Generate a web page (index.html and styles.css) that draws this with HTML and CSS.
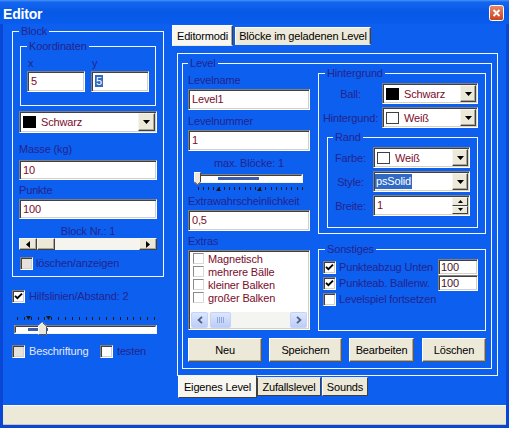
FILE: index.html
```html
<!DOCTYPE html>
<html>
<head>
<meta charset="utf-8">
<title>Editor</title>
<link rel="stylesheet" href="styles.css">
</head>
<body>
<div class="window">
  <div class="titlebar">
    <span class="title">Editor</span>
    <svg class="close" width="15" height="16" viewBox="0 0 15 16">
      <defs><linearGradient id="cg" x1="0" y1="0" x2="0" y2="1"><stop offset="0" stop-color="#ea8a6c"/><stop offset="1" stop-color="#c9401c"/></linearGradient></defs>
      <rect x="0.5" y="0.5" width="14" height="15" rx="2" fill="url(#cg)" stroke="#fff"/>
      <path d="M4.5 5L10.5 11M10.5 5L4.5 11" stroke="#fff" stroke-width="1.8"/>
    </svg>
  </div>
  <div class="frame">
    <div class="client">
      <div class="leftcol">
        <fieldset class="grp block">
          <legend>Block</legend>
          <fieldset class="grp coords">
            <legend>Koordinaten</legend>
            <div class="coord-row">
              <div class="coord"><div class="clbl">x</div><div class="edit">5</div></div>
              <div class="coord"><div class="clbl">y</div><div class="edit"><span class="sel">5</span></div></div>
            </div>
          </fieldset>
          <div class="combo bcombo"><span class="swatch black"></span><span class="ctext">Schwarz</span><span class="dd"><svg width="7" height="4" viewBox="0 0 7 4"><path d="M0 0h7L3.5 4z"/></svg></span></div>
          <div class="lbl l-masse">Masse (kg)</div>
          <div class="edit e-masse">10</div>
          <div class="lbl l-punkte">Punkte</div>
          <div class="edit e-punkte">100</div>
          <div class="lbl center l-blocknr">Block Nr.: 1</div>
          <div class="hscroll">
            <span class="sbtn"><svg width="4" height="7" viewBox="0 0 4 7"><path d="M4 0v7L0 3.5z"/></svg></span>
            <span class="sthumb"></span>
            <span class="strack"></span>
            <span class="sbtn"><svg width="4" height="7" viewBox="0 0 4 7"><path d="M0 0v7L4 3.5z"/></svg></span>
          </div>
          <div class="chk c-loeschen"><span class="cb dis"></span><span>löschen/anzeigen</span></div>
        </fieldset>
        <div class="chk c-hilfs"><span class="cb"><svg width="9" height="9" viewBox="0 0 9 9"><path d="M1 3.8L3.4 6.2L8 1.6" stroke="#000" stroke-width="1.9" fill="none"/></svg></span><span>Hilfslinien/Abstand: 2</span></div>
        <svg class="tb1" width="146" height="24" viewBox="0 0 146 24">
          <g stroke="#1a1a1a" shape-rendering="crispEdges">
            <path d="M5.5 4v3M12.5 4v3M19.5 4v3M26.5 4v3M32.5 4v3M39.5 4v3M46.5 4v3M53.5 4v3M60.5 4v3M67.5 4v3M74.5 4v3M80.5 4v3M87.5 4v3M94.5 4v3M101.5 4v3M108.5 4v3M115.5 4v3M121.5 4v3M128.5 4v3M135.5 4v3M142.5 4v3"/>
          </g>
          <path d="M14 3h5l-2.5 4zM34 3h5l-2.5 4z" fill="#1a1a1a"/>
          <rect x="2" y="12" width="143" height="9" fill="#fff"/>
          <path d="M2.5 20.5V12.5H144.5" stroke="#808080" fill="none"/>
          <path d="M3.5 19.5V13.5H143.5" stroke="#404040" fill="none"/>
          <path d="M2.5 20.5H144.5V12.5" stroke="#f4f3ee" fill="none"/>
          <rect x="16" y="15" width="20" height="3" fill="#3d5cb0"/>
          <path d="M26 13L30.5 9L35 13V22H26z" fill="#ece9d8"/>
          <path d="M26.5 21.5V13.2L30.5 9.6" stroke="#fff" fill="none"/>
          <path d="M30.5 9.6L34.5 13.2V21.5H26.5" stroke="#555" fill="none"/>
        </svg>
        <div class="besch-row">
          <div class="chk c-besch"><span class="cb dis"></span><span class="disabled">Beschriftung</span></div>
          <div class="chk"><span class="cb"></span><span>testen</span></div>
        </div>
      </div>
      <div class="rightcol">
        <div class="toptabs">
          <div class="tab on t-edit">Editormodi</div>
          <div class="tab t-blk">Blöcke im geladenen Level</div>
        </div>
        <div class="panel">
          <fieldset class="grp level">
            <legend>Level</legend>
            <div class="lv-cols">
              <div class="lcol">
                <div class="lbl l-lname">Levelname</div>
                <div class="edit e-lv">Level1</div>
                <div class="lbl l-lnum">Levelnummer</div>
                <div class="edit e-lv">1</div>
                <div class="lbl center l-max">max. Blöcke: 1</div>
                <svg class="tb2" width="114" height="24" viewBox="0 0 114 24">
                  <rect x="6" y="4" width="105" height="9" fill="#fff"/>
                  <path d="M6.5 12.5V4.5H110.5" stroke="#808080" fill="none"/>
                  <path d="M7.5 11.5V5.5H109.5" stroke="#404040" fill="none"/>
                  <path d="M6.5 12.5H110.5V4.5" stroke="#f4f3ee" fill="none"/>
                  <rect x="26" y="7" width="41" height="3" fill="#3d5cb0"/>
                  <path d="M2 2H9V12L5.5 15L2 12z" fill="#ece9d8"/>
                  <path d="M2.5 12V2.5H8.5" stroke="#fff" fill="none"/>
                  <path d="M8.5 2.5V12L5.5 14.6L2.5 12" stroke="#6b3a2a" fill="none"/>
                  <g stroke="#1a1a1a" shape-rendering="crispEdges">
                    <path d="M6.5 17v3M11.5 17v3M16.5 17v3M21.5 17v3M27.5 17v3M32.5 17v3M37.5 17v3M42.5 17v3M47.5 17v3M53.5 17v3M58.5 17v3M63.5 17v3M68.5 17v3M73.5 17v3M79.5 17v3M84.5 17v3M89.5 17v3M94.5 17v3M99.5 17v3M105.5 17v3M110.5 17v3"/>
                  </g>
                  <path d="M24 21h5l-2.5-4zM65 21h5l-2.5-4z" fill="#1a1a1a"/>
                </svg>
                <div class="lbl l-extra">Extrawahrscheinlichkeit</div>
                <div class="edit e-lv">0,5</div>
                <div class="lbl l-extras">Extras</div>
                <div class="list">
                  <div class="items">
                    <div class="li"><span class="cb2"></span><span>Magnetisch</span></div>
                    <div class="li"><span class="cb2"></span><span>mehrere Bälle</span></div>
                    <div class="li"><span class="cb2"></span><span>kleiner Balken</span></div>
                    <div class="li"><span class="cb2"></span><span>großer Balken</span></div>
                  </div>
                  <div class="xpscroll">
                    <span class="xpbtn"><svg width="6" height="8" viewBox="0 0 6 8"><path d="M5 0.8L1.6 4L5 7.2" stroke="#4d6185" stroke-width="1.8" fill="none"/></svg></span>
                    <span class="xpthumb"><svg width="7" height="6" viewBox="0 0 7 6"><path d="M0.5 0v6M2.5 0v6M4.5 0v6M6.5 0v6" stroke="#8ea6e0" fill="none"/></svg></span>
                    <span class="xpgap"></span>
                    <span class="xpbtn"><svg width="6" height="8" viewBox="0 0 6 8"><path d="M1 0.8L4.4 4L1 7.2" stroke="#4d6185" stroke-width="1.8" fill="none"/></svg></span>
                  </div>
                </div>
              </div>
              <div class="rcol">
                <fieldset class="grp hg">
                  <legend>Hintergrund</legend>
                  <div class="frow r-ball"><span class="flbl">Ball:</span><div class="combo sm"><span class="swatch black"></span><span class="ctext">Schwarz</span><span class="dd"><svg width="7" height="4" viewBox="0 0 7 4"><path d="M0 0h7L3.5 4z"/></svg></span></div></div>
                  <div class="frow r-hg"><span class="flbl">Hintergund:</span><div class="combo sm"><span class="swatch white"></span><span class="ctext">Weiß</span><span class="dd"><svg width="7" height="4" viewBox="0 0 7 4"><path d="M0 0h7L3.5 4z"/></svg></span></div></div>
                  <fieldset class="grp rand">
                    <legend>Rand</legend>
                    <div class="frow r-farbe"><span class="flbl">Farbe:</span><div class="combo sm wide97"><span class="swatch white"></span><span class="ctext">Weiß</span><span class="dd"><svg width="7" height="4" viewBox="0 0 7 4"><path d="M0 0h7L3.5 4z"/></svg></span></div></div>
                    <div class="frow r-style"><span class="flbl">Style:</span><div class="combo sm wide97 notext"><span class="sel">psSolid</span><span class="dd"><svg width="7" height="4" viewBox="0 0 7 4"><path d="M0 0h7L3.5 4z"/></svg></span></div></div>
                    <div class="frow r-breite"><span class="flbl">Breite:</span><div class="edit spin"><span class="spintext">1</span><span class="spinbtns"><span class="spb"><svg width="5" height="3" viewBox="0 0 5 3"><path d="M0 3h5L2.5 0z"/></svg></span><span class="spb"><svg width="5" height="3" viewBox="0 0 5 3"><path d="M0 0h5L2.5 3z"/></svg></span></span></div></div>
                  </fieldset>
                </fieldset>
                <fieldset class="grp son">
                  <legend>Sonstiges</legend>
                  <div class="srow s1"><span class="cb"><svg width="9" height="9" viewBox="0 0 9 9"><path d="M1 3.8L3.4 6.2L8 1.6" stroke="#000" stroke-width="1.9" fill="none"/></svg></span><span>Punkteabzug Unten</span><div class="edit small">100</div></div>
                  <div class="srow"><span class="cb"><svg width="9" height="9" viewBox="0 0 9 9"><path d="M1 3.8L3.4 6.2L8 1.6" stroke="#000" stroke-width="1.9" fill="none"/></svg></span><span>Punkteab. Ballenw.</span><div class="edit small">100</div></div>
                  <div class="srow s3"><span class="cb"></span><span>Levelspiel fortsetzen</span></div>
                </fieldset>
              </div>
            </div>
            <div class="btns">
              <div class="btn b-neu">Neu</div>
              <div class="btn b-speichern">Speichern</div>
              <div class="btn b-bearb">Bearbeiten</div>
              <div class="btn b-loeschen">Löschen</div>
            </div>
          </fieldset>
        </div>
        <div class="btabs">
          <div class="bt on bt-eigen">Eigenes Level</div>
          <div class="bt focus bt-zufall">Zufallslevel</div>
          <div class="bt bt-sounds">Sounds</div>
        </div>
      </div>
    </div>
    <div class="status"></div>
  </div>
</div>
</body>
</html>
```
FILE: styles.css
```css
* { box-sizing: border-box; }
html, body { margin: 0; padding: 0; }
body {
  font-family: "Liberation Sans", Arial, sans-serif;
  font-size: 11px;
  letter-spacing: -0.15px;
  color: #24248c;
  background: #0d5ff0;
}
.window {
  width: 509px;
  height: 428px;
  display: flex;
  flex-direction: column;
  background: #0d5ff0;
  overflow: hidden;
}
.titlebar {
  height: 24px;
  flex: none;
  display: flex;
  align-items: flex-start;
  padding: 0 5px 0 3px;
  background: linear-gradient(180deg, #4a94fa 0, #1566ee 2px, #0658e6 12px, #0a5cec 24px);
}
.title {
  flex: 1;
  color: #fff;
  font-weight: bold;
  font-size: 14px;
  line-height: 16px;
  margin-top: 6px;
  letter-spacing: -0.2px;
}
.close { display: block; margin-top: 5px; }
.frame {
  flex: 1;
  display: flex;
  flex-direction: column;
  border: 3px solid #0946d4;
  border-top: 0;
  min-height: 0;
}
.client { flex: 1; display: flex; min-height: 0; }
.status {
  flex: none;
  height: 20px;
  background: #ece9d8;
  border-top: 1px solid #fbfaf6;
  border-bottom: 1px solid #c8c4b4;
}

/* group boxes */
.grp {
  margin: 0;
  padding: 0;
  border: 1px solid #f4f7fe;
  min-inline-size: 0;
}
.grp > legend {
  padding: 0 2px;
  margin: 0;
  line-height: 12px;
  height: 12px;
  color: #24248c;
}

/* left column */
.leftcol { width: 169px; flex: none; padding: 1px 0 0 9px; }
.block { width: 152px; padding: 0 6px 6px; }
.coords { margin: 3px 1px 0; padding: 5px 6px 13px; }
.coord-row { display: flex; gap: 6px; }
.coord { width: 58px; }
.clbl { line-height: 12px; height: 12px; margin: 0 0 2px 1px; }

.edit {
  height: 21px;
  background: #fff;
  border: 1px solid;
  border-color: #808080 #fff #fff #808080;
  box-shadow: inset 1px 1px 0 #404040, inset -1px -1px 0 #d4d0c8;
  padding: 0 2px 0 3px;
  line-height: 19px;
  color: #7b0c2a;
  white-space: nowrap;
}
.sel { background: #316ac5; color: #fff; padding: 0 1px; }
.combo {
  height: 22px;
  display: flex;
  align-items: center;
  background: #fff;
  border: 1px solid;
  border-color: #808080 #fff #fff #808080;
  box-shadow: inset 1px 1px 0 #404040, inset -1px -1px 0 #d4d0c8;
  padding: 1px 1px 1px 3px;
  color: #7b0c2a;
}
.bcombo { margin-top: 5px; }
.swatch { width: 13px; height: 12px; flex: none; }
.swatch.black { background: #000; }
.swatch.white { background: #fff; border: 1px solid #404040; }
.ctext { margin-left: 5px; }
.dd {
  margin-left: auto;
  width: 17px;
  height: 18px;
  flex: none;
  background: #ece9d8;
  border: 1px solid;
  border-color: #f6f5f0 #404040 #404040 #f6f5f0;
  box-shadow: inset -1px -1px 0 #aca899;
  display: flex;
  align-items: center;
  justify-content: center;
}
.lbl { line-height: 13px; height: 13px; white-space: nowrap; }
.center { text-align: center; }
.l-masse { margin-top: 10px; }
.e-masse { margin-top: 4px; height: 20px; line-height: 18px; }
.l-punkte { margin-top: 4px; }
.e-punkte { margin-top: 2px; height: 20px; line-height: 18px; }
.l-blocknr { margin-top: 6px; }

.hscroll { display: flex; height: 12px; }
.sbtn, .sthumb {
  width: 18px;
  flex: none;
  background: #ece9d8;
  border: 1px solid;
  border-color: #f6f5f0 #404040 #404040 #f6f5f0;
  box-shadow: inset -1px -1px 0 #aca899;
  display: flex;
  align-items: center;
  justify-content: center;
}
.strack { flex: 1; background: #f5f4ee; }

.chk { display: flex; align-items: center; height: 13px; line-height: 13px; white-space: nowrap; }
.cb {
  width: 13px;
  height: 13px;
  flex: none;
  background: #fff;
  border: 1px solid;
  border-color: #808080 #fff #fff #808080;
  box-shadow: inset 1px 1px 0 #404040, inset -1px -1px 0 #d4d0c8;
  display: flex;
  align-items: center;
  justify-content: center;
  margin-right: 4px;
}
.cb.dis { background: #e4e2da; }
.c-loeschen { margin-top: 6px; height: 14px; padding-left: 1px; }
.c-loeschen .cb { margin-right: 3px; }
.c-hilfs { margin-top: 13px; }
.tb1 { display: block; margin-top: 10px; }
.besch-row { display: flex; margin-top: 8px; }
.c-besch { width: 88px; }
.disabled { color: #e6e8f2; }

/* right column */
.rightcol { flex: 1; padding-top: 1px; min-width: 0; }
.toptabs { display: flex; align-items: flex-start; height: 21px; }
.tab {
  background: #ece9d8;
  border: 1px solid;
  border-color: #fdfdfb #404040 #ece9d8 #fdfdfb;
  box-shadow: inset -1px 0 0 #aca899;
  color: #000;
  display: flex;
  align-items: center;
  justify-content: center;
  white-space: nowrap;
}
.tab.on { background: #f7f6f1; }
.t-edit { width: 61px; height: 21px; }
.t-blk { width: 136px; height: 18px; margin: 2px 0 0 2px; }

.panel {
  margin: 7px 0 0 5px;
  width: 321px;
  height: 323px;
  border: 1px solid #f4f7fe;
  padding: 3px 0 0 4px;
}
.level { width: 310px; padding: 0 5px 6px; }
.lv-cols { display: flex; align-items: flex-start; }
.lcol { width: 122px; flex: none; }
.rcol { width: 168px; flex: none; margin: -2px 0 0 8px; }

.l-lname { margin-top: 5px; }
.e-lv { margin-top: 2px; }
.l-lnum { margin-top: 5px; }
.l-max { margin-top: 6px; }
.tb2 { display: block; margin-left: 4px; }
.l-extra { margin-top: 1px; }
.l-extras { margin-top: 4px; }

.list {
  margin-top: 2px;
  height: 80px;
  background: #fff;
  border: 1px solid;
  border-color: #808080 #fff #fff #808080;
  box-shadow: inset 1px 1px 0 #404040, inset -1px -1px 0 #d4d0c8;
  padding: 1px 2px 1px 2px;
  display: flex;
  flex-direction: column;
}
.items { flex: 1; }
.li { display: flex; align-items: center; height: 13px; color: #7b0c2a; padding-left: 2px; white-space: nowrap; }
.cb2 {
  width: 11px;
  height: 11px;
  flex: none;
  border: 1px solid #8a8a8a;
  border-right-color: #d8d8d8;
  border-bottom-color: #d8d8d8;
  background: #fff;
  margin-right: 4px;
}
.xpscroll { display: flex; height: 16px; background: #f4f4f0; }
.xpbtn, .xpthumb {
  width: 17px;
  flex: none;
  background: linear-gradient(180deg, #dce6fd, #bccdf6);
  border: 1px solid #c4d3fb;
  border-radius: 2px;
  display: flex;
  align-items: center;
  justify-content: center;
}
.xpthumb { width: 21px; margin-left: 2px; }
.xpgap { flex: 1; }

.hg { width: 168px; padding: 0 7px 5px 0; }
.hg > legend { margin-left: 6px; }
.frow { display: flex; align-items: center; height: 21px; }
.flbl { text-align: center; flex: none; white-space: nowrap; }
.hg .flbl { width: 63px; }
.r-ball { margin-top: 4px; }
.r-hg { margin-top: 3px; }
.combo.sm { width: 96px; height: 21px; }
.combo.sm .dd { width: 16px; height: 17px; }
.combo.wide97 { width: 97px; }
.combo.notext { padding-left: 1px; }
.combo.notext .sel { line-height: 15px; }
.rand { width: 151px; margin: 3px 0 0 8px; padding: 0 7px 11px 0; }
.rand > legend { margin-left: 5px; }
.rand .flbl { width: 45px; }
.r-farbe { margin-top: 4px; }
.r-style { margin-top: 3px; }
.r-breite { margin-top: 3px; }
.spin { width: 97px; display: flex; align-items: stretch; padding: 1px 1px 1px 3px; line-height: 17px; }
.spintext { flex: 1; }
.spinbtns { width: 16px; display: flex; flex-direction: column; }
.spb {
  flex: 1;
  background: #ece9d8;
  border: 1px solid;
  border-color: #f6f5f0 #404040 #404040 #f6f5f0;
  display: flex;
  align-items: center;
  justify-content: center;
}

.son { width: 168px; margin-top: 9px; padding: 0 7px 24px 4px; }
.son > legend { margin-left: 2px; }
.srow { display: flex; align-items: center; height: 16px; white-space: nowrap; }
.srow .cb { margin-right: 3px; }
.s1 { margin-top: 4px; }
.s3 { margin-top: 1px; height: 14px; }
.edit.small { width: 40px; height: 16px; line-height: 14px; margin-left: auto; padding-left: 2px; color: #4a1228; }

.btns { display: flex; margin-top: 7px; }
.btn {
  height: 24px;
  background: #ece9d8;
  border: 1px solid;
  border-color: #fff #5a5850 #5a5850 #fff;
  box-shadow: inset -1px -1px 0 #aca899;
  color: #000;
  display: flex;
  align-items: center;
  justify-content: center;
}
.b-neu { width: 74px; }
.b-speichern { width: 73px; margin-left: 7px; }
.b-bearb { width: 65px; margin-left: 7px; }
.b-loeschen { width: 64px; margin-left: 8px; }

.btabs { display: flex; align-items: flex-start; margin-left: 6px; height: 23px; }
.bt {
  height: 19px;
  margin-top: 1px;
  background: #ece9d8;
  border: 1px solid;
  border-color: #ece9d8 #404040 #404040 #fdfdfb;
  color: #000;
  display: flex;
  align-items: center;
  justify-content: center;
  white-space: nowrap;
}
.bt.on { height: 23px; margin-top: -1px; background: #f7f6f1; border-top-color: #f7f6f1; }
.bt.focus { border-left-color: #404040; }
.bt-eigen { width: 79px; }
.bt-zufall { width: 64px; }
.bt-sounds { width: 46px; margin-left: 1px; }
```
